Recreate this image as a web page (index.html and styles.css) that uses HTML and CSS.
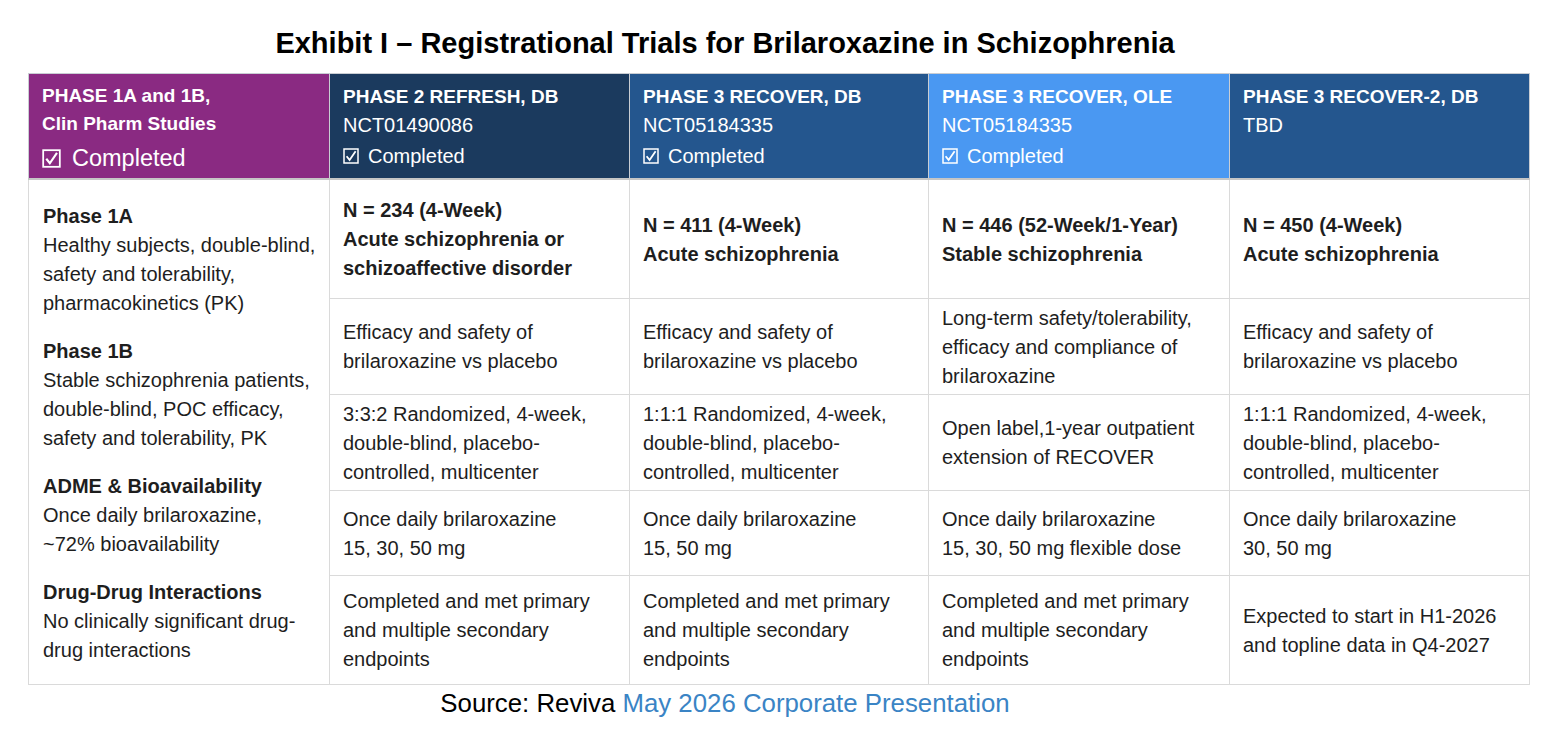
FILE: index.html
```html
<!DOCTYPE html>
<html lang="en">
<head>
<meta charset="utf-8">
<title>Exhibit I – Registrational Trials for Brilaroxazine in Schizophrenia</title>
<link rel="stylesheet" href="styles.css">
</head>
<body>
<div class="page">
  <h1 class="caption">Exhibit I – Registrational Trials for Brilaroxazine in Schizophrenia</h1>
  <table class="trials">
    <colgroup>
      <col class="c1"><col class="c2"><col class="c3"><col class="c4"><col class="c5">
    </colgroup>
    <thead>
      <tr class="head">
        <th class="h purple">
          <div class="h-title">PHASE 1A and 1B,<br>Clin Pharm Studies</div>
          <div class="h-status big"><svg class="chk" viewBox="0 0 16 16"><rect x="1" y="1" width="14" height="14" fill="none" stroke="#fff" stroke-width="1.5"/><path d="M3.6 8.2 L6.6 12 L12.6 3.2" fill="none" stroke="#fff" stroke-width="1.8"/></svg><span>Completed</span></div>
        </th>
        <th class="h navy">
          <div class="h-title">PHASE 2 REFRESH, DB</div>
          <div class="h-id">NCT01490086</div>
          <div class="h-status"><svg class="chk" viewBox="0 0 16 16"><rect x="1" y="1" width="14" height="14" fill="none" stroke="#fff" stroke-width="1.5"/><path d="M3.6 8.2 L6.6 12 L12.6 3.2" fill="none" stroke="#fff" stroke-width="1.8"/></svg><span>Completed</span></div>
        </th>
        <th class="h blue">
          <div class="h-title">PHASE 3 RECOVER, DB</div>
          <div class="h-id">NCT05184335</div>
          <div class="h-status"><svg class="chk" viewBox="0 0 16 16"><rect x="1" y="1" width="14" height="14" fill="none" stroke="#fff" stroke-width="1.5"/><path d="M3.6 8.2 L6.6 12 L12.6 3.2" fill="none" stroke="#fff" stroke-width="1.8"/></svg><span>Completed</span></div>
        </th>
        <th class="h sky">
          <div class="h-title">PHASE 3 RECOVER, OLE</div>
          <div class="h-id">NCT05184335</div>
          <div class="h-status"><svg class="chk" viewBox="0 0 16 16"><rect x="1" y="1" width="14" height="14" fill="none" stroke="#fff" stroke-width="1.5"/><path d="M3.6 8.2 L6.6 12 L12.6 3.2" fill="none" stroke="#fff" stroke-width="1.8"/></svg><span>Completed</span></div>
        </th>
        <th class="h blue">
          <div class="h-title">PHASE 3 RECOVER-2, DB</div>
          <div class="h-id">TBD</div>
        </th>
      </tr>
    </thead>
    <tbody>
      <tr class="r1">
        <td class="early" rowspan="5">
          <div class="grp">
            <div class="b">Phase 1A</div>
            <div>Healthy subjects, double-blind,<br>safety and tolerability,<br>pharmacokinetics (PK)</div>
          </div>
          <div class="grp">
            <div class="b">Phase 1B</div>
            <div>Stable schizophrenia patients,<br>double-blind, POC efficacy,<br>safety and tolerability, PK</div>
          </div>
          <div class="grp">
            <div class="b">ADME &amp; Bioavailability</div>
            <div>Once daily brilaroxazine,<br>~72% bioavailability</div>
          </div>
          <div class="grp">
            <div class="b">Drug-Drug Interactions</div>
            <div>No clinically significant drug-<br>drug interactions</div>
          </div>
        </td>
        <td class="b">N = 234 (4-Week)<br>Acute schizophrenia or<br>schizoaffective disorder</td>
        <td class="b">N = 411 (4-Week)<br>Acute schizophrenia</td>
        <td class="b">N = 446 (52-Week/1-Year)<br>Stable schizophrenia</td>
        <td class="b">N = 450 (4-Week)<br>Acute schizophrenia</td>
      </tr>
      <tr class="r2">
        <td>Efficacy and safety of<br>brilaroxazine vs placebo</td>
        <td>Efficacy and safety of<br>brilaroxazine vs placebo</td>
        <td>Long-term safety/tolerability,<br>efficacy and compliance of<br>brilaroxazine</td>
        <td>Efficacy and safety of<br>brilaroxazine vs placebo</td>
      </tr>
      <tr class="r3">
        <td>3:3:2 Randomized, 4-week,<br>double-blind, placebo-<br>controlled, multicenter</td>
        <td>1:1:1 Randomized, 4-week,<br>double-blind, placebo-<br>controlled, multicenter</td>
        <td>Open label,1-year outpatient<br>extension of RECOVER</td>
        <td>1:1:1 Randomized, 4-week,<br>double-blind, placebo-<br>controlled, multicenter</td>
      </tr>
      <tr class="r4">
        <td>Once daily brilaroxazine<br>15, 30, 50 mg</td>
        <td>Once daily brilaroxazine<br>15, 50 mg</td>
        <td>Once daily brilaroxazine<br>15, 30, 50 mg flexible dose</td>
        <td>Once daily brilaroxazine<br>30, 50 mg</td>
      </tr>
      <tr class="r5">
        <td>Completed and met primary<br>and multiple secondary<br>endpoints</td>
        <td>Completed and met primary<br>and multiple secondary<br>endpoints</td>
        <td>Completed and met primary<br>and multiple secondary<br>endpoints</td>
        <td>Expected to start in H1-2026<br>and topline data in Q4-2027</td>
      </tr>
    </tbody>
  </table>
  <p class="source">Source: Reviva <a class="link" href="#">May 2026 Corporate Presentation</a></p>
</div>
</body>
</html>
```

FILE: styles.css
```css
html, body {
  margin: 0;
  padding: 0;
  background: #ffffff;
}

body {
  font-family: "Liberation Sans", Arial, sans-serif;
  color: #1a1a1a;
}

.page {
  width: 1450px;
  padding-top: 27px;
}

.caption {
  margin: 0 0 14px 0;
  text-align: center;
  font-size: 29px;
  line-height: 32px;
  font-weight: 700;
  color: #000;
}

.trials {
  margin-left: 28px;
  width: 1501px;
  table-layout: fixed;
  border-collapse: collapse;
  border: 1px solid #d6d6d6;
}

.c1 { width: 301px; }
.c2 { width: 300px; }
.c3 { width: 299px; }
.c4 { width: 301px; }
.c5 { width: 300px; }

.head { height: 105px; }
.r1 { height: 119px; }
.r2 { height: 96px; }
.r3 { height: 96px; }
.r4 { height: 85px; }
.r5 { height: 109px; }

.h {
  vertical-align: top;
  text-align: left;
  padding: 9px 13px 0 13px;
  color: #ffffff;
  font-weight: 400;
  border: 1px solid #c9cdd3;
  border-bottom: 2px solid #c6c6c6;
}

.purple { background: #8a2a82; padding-top: 8px; }
.navy { background: #1b3a5e; }
.blue { background: #24568e; }
.sky { background: #4a98f2; }

.h-title {
  font-size: 19px;
  line-height: 28px;
  font-weight: 700;
  white-space: nowrap;
}

.h-id {
  font-size: 20px;
  line-height: 28px;
  white-space: nowrap;
}

.h-status {
  display: flex;
  align-items: center;
  gap: 9px;
  font-size: 20px;
  line-height: 34px;
  white-space: nowrap;
}

.h-status .chk {
  width: 16px;
  height: 16px;
  flex: none;
}

.h-status.big {
  font-size: 23.5px;
  line-height: 40px;
  gap: 11px;
}

.h-status.big .chk {
  width: 19px;
  height: 19px;
}

.trials td {
  vertical-align: middle;
  padding: 2px 13px 0 13px;
  font-size: 20px;
  line-height: 29px;
  white-space: nowrap;
  color: #1e1e1e;
  border: 1px solid #dadada;
}

.trials td.early {
  padding: 4px 14px 0 14px;
}

.grp + .grp {
  margin-top: 19px;
}

.b {
  font-weight: 700;
}

.trials td.b {
  font-weight: 700;
}

.source {
  margin: 3px 0 0 0;
  text-align: center;
  font-size: 25.8px;
  line-height: 30px;
  color: #000;
}

.link {
  color: #3a84c5;
  text-decoration: none;
}
```
